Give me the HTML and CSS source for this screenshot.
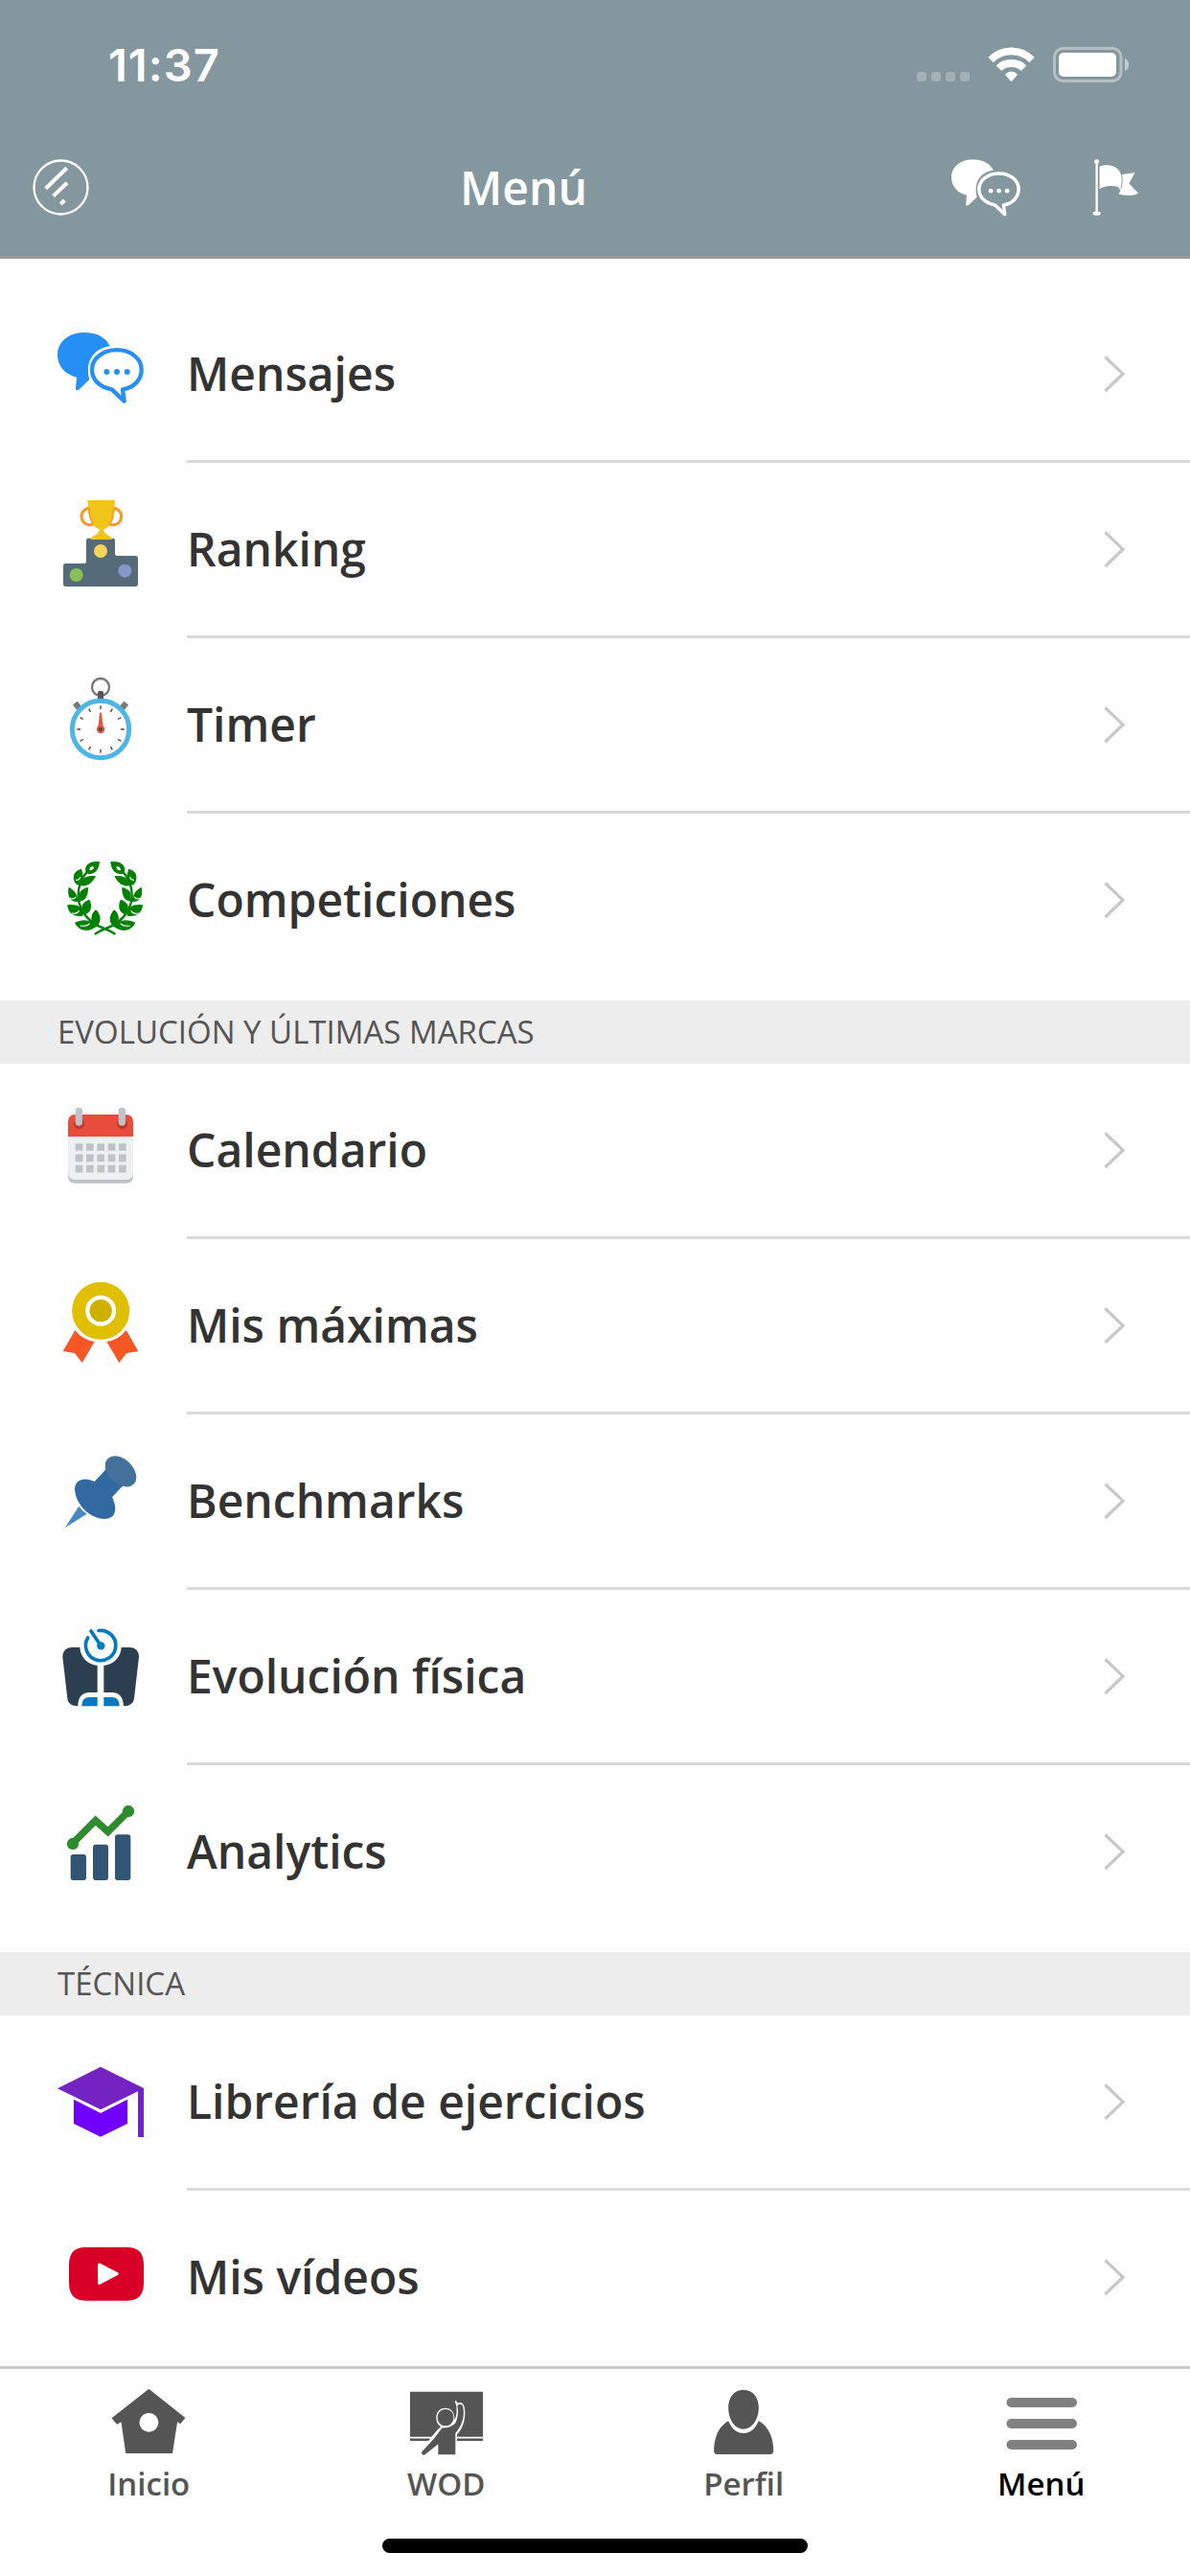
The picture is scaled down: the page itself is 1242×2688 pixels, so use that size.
FILE: index.html
```html
<!DOCTYPE html>
<html lang="es">
<head>
<meta charset="utf-8">
<title>Menú</title>
<link rel="stylesheet" href="styles.css">
</head>
<body>
<svg class="defs" aria-hidden="true">
  <symbol id="chat" viewBox="60 57 270 270">
    <path fill="currentColor" d="M142 81c46 0 71 18 82 43c-40 4-68 35-68 73c0 12 1 22 4 31l-32 31c-5 5-12 3-11-4l3-34c-38-8-60-37-60-70c0-42 37-70 82-70z"/>
    <path fill="none" stroke="currentColor" stroke-width="13" stroke-linejoin="round" d="M246 135.500c43 0 77 27 77 61.500c0 31-23 57-59 62l5 37-39-37c-38-7-62-30-62-62c0-35 35-61.500 78-61.500z"/>
    <g fill="currentColor"><circle cx="214" cy="204" r="9"/><circle cx="246" cy="204" r="9"/><circle cx="278" cy="204" r="9"/></g>
  </symbol>
  <symbol id="chevron" viewBox="0 0 24 40"><path fill="none" stroke="#c8c8c8" stroke-width="3.200" d="M2.500 2.500L21 20.200 2.500 38"/></symbol>
  <g id="branch">
    <path fill="none" stroke="#008000" stroke-width="7" stroke-linecap="round" d="M239 883C220 868 190 864 168 846C138 822 125 790 125 765C125 735 134 708 154 688"/>
    <path fill="#008000" fill-rule="evenodd" d="M192 657C170 656 152 661 148 677C145 689 152 697 163 696C181 694 190 680 192 657zM160 684C160 676 166 671 174 674C173 681 168 685 160 684z"/>
    <path fill="#008000" d="M135 680C116 684 109 697 111 711C112 721 117 730 127 731L134 715C143 700 138 690 135 680zM180 703C157 699 138 707 137 718L129 731C152 739 168 725 180 703zM95 737C90 760 97 784 123 783C129 778 126 773 122 768C116 751 107 743 95 737zM156 738C137 741 127 752 129 764L126 782C148 781 157 764 156 738zM91 793C92 815 108 832 139 827L142 817C139 798 116 788 91 793zM160 776C142 782 134 793 137 807L144 823C167 818 170 794 160 776zM114 848C125 873 154 880 178 863L188 855L170 848C151 837 132 840 114 848zM180 808C166 819 161 838 173 851L188 855C199 839 193 819 180 808z"/>
    <path fill="none" stroke="#fff" stroke-width="3.500" stroke-linecap="round" d="M119 715Q129 715 131 706M100 772Q112 777 117 768M105 819Q121 822 127 812M132 858Q151 861 160 852"/>
  </g>
</svg>

<header class="header">
  <div class="status">
    <time class="clock">11:37</time>
    <svg class="status-icons" viewBox="956 48 224 40">
      <g fill="#fff" fill-opacity=".25"><rect x="957" y="75" width="10" height="10" rx="3"/><rect x="972" y="75" width="10" height="10" rx="3"/><rect x="987" y="75" width="10" height="10" rx="3"/><rect x="1002" y="75" width="10" height="10" rx="3"/></g>
      <g fill="none" stroke="#fff" stroke-width="7.800"><path d="M1034 62.400Q1043 53.300 1055.500 53.300T1077 62.400"/><path d="M1042.500 71.200Q1047.500 66 1055.500 66T1068.500 71.200"/></g>
      <path fill="#fff" d="M1049 77.700Q1055.500 71.500 1062 77.700L1056.300 84.500Q1055.500 85.300 1054.700 84.500z"/>
      <rect x="1100.500" y="50.500" width="69.500" height="34" rx="9" fill="none" stroke="#fff" stroke-opacity=".4" stroke-width="3"/>
      <rect x="1105" y="55" width="60" height="25" rx="5" fill="#fff"/>
      <path fill="#fff" fill-opacity=".5" d="M1174 61q4 1.500 4 6.500t-4 6.500z"/>
    </svg>
  </div>
  <div class="nav">
    <svg class="logo" viewBox="34 166 60 60"><circle cx="63.500" cy="195.500" r="28" fill="none" stroke="#fff" stroke-width="2.300"/><path fill="none" stroke="#fff" stroke-width="4" d="M69.800 175.300L47.700 196.800M70 190.700L55.600 204.600M63.300 213L67.300 209"/></svg>
    <h1 class="title">Menú</h1>
    <svg class="nav-chat"><use href="#chat"/></svg>
    <svg class="flag" viewBox="480 44 148 184"><path fill="#fff" d="M490.500 60h7v153h-7zM503 70C530 60 560 67 570 93C576 111 571 127 569 147C563 136 564 136 558 134C540 129 519 131 503 141zM574 95L614 90L596 124L625 154C608 166 580 161 563 157C574 142 578 119 574 95z"/><circle cx="494" cy="55" r="7.500" fill="#fff"/><ellipse cx="494" cy="218" rx="12.500" ry="6.500" fill="#fff"/></svg>
  </div>
</header>

<main class="menu">
  <ul class="group">
    <li class="row"><svg class="icon blue"><use href="#chat"/></svg><div class="body"><span>Mensajes</span><svg class="chev"><use href="#chevron"/></svg></div></li>
    <li class="row">
      <svg class="icon" viewBox="60 606 270 270">
        <path fill="#556b79" d="M78 811q0-7 7-7h58q7 0 7-7v-65q0-7 7-7h76q7 0 7 7v41q0 7 7 7h58q7 0 7 7v82q0 7-7 7H85q-7 0-7-7z"/>
        <circle cx="195" cy="765" r="21" fill="#f3d55b"/><circle cx="119" cy="840" r="21" fill="#88c057"/><circle cx="271" cy="827" r="21" fill="#8697cb"/>
        <g fill="none" stroke="#f49c20" stroke-width="9"><path d="M163 631a26 26 0 1 0 10 49M232 631a26 26 0 1 1-10 49"/></g>
        <path fill="#f0c419" d="M155 606h85q0 45-10 65-8 20-26 26 1 11 14 19 12 4 13 13h-67q1-9 13-13 14-8 15-19-18-6-27-26-10-20-10-65z"/>
        <path fill="none" stroke="#f49c20" stroke-width="5" d="M159 629q0 34 13 51M236 629q0 34-13 51"/>
      </svg><div class="body"><span>Ranking</span><svg class="chev"><use href="#chevron"/></svg></div></li>
    <li class="row">
      <svg class="icon" viewBox="60 75 270 270">
        <circle cx="195" cy="111" r="27" fill="none" stroke="#777" stroke-width="7"/>
        <path fill="none" stroke="#777" stroke-width="18" d="M115 161l13 16M275 161l-13 16"/>
        <path fill="#555" d="M186 128q0-5 5-5h8q5 0 5 5v23h-18z"/>
        <circle cx="195" cy="243" r="89" fill="#fff" stroke="#4db6e6" stroke-width="15"/>
        <g stroke="#444" stroke-width="4"><path id="tk" d="M195 169v11M195 306v11"/><use href="#tk" transform="rotate(30 195 243)"/><use href="#tk" transform="rotate(60 195 243)"/><use href="#tk" transform="rotate(90 195 243)"/><use href="#tk" transform="rotate(120 195 243)"/><use href="#tk" transform="rotate(150 195 243)"/></g>
        <path fill="#e9573f" d="M192 192q3-4 6 0l5 45h-16z"/><circle cx="195" cy="243" r="12.500" fill="#e9573f"/><circle cx="195" cy="243" r="7" fill="#5a4a48"/>
      </svg><div class="body"><span>Timer</span><svg class="chev"><use href="#chevron"/></svg></div></li>
    <li class="row">
      <svg class="icon" viewBox="60 624 270 270"><use href="#branch"/><use href="#branch" transform="matrix(-1 0 0 1 418 0)"/></svg><div class="body"><span>Competiciones</span><svg class="chev"><use href="#chevron"/></svg></div></li>
  </ul>
  <h2 class="section">EVOLUCIÓN Y ÚLTIMAS MARCAS</h2>
  <ul class="group">
    <li class="row">
      <svg class="icon" viewBox="60 357 270 270">
        <path fill="#bdc3c7" d="M93 450h204v141q0 23-23 23H116q-23 0-23-23z"/>
        <path fill="#ecf0f1" d="M93 450h204v130q0 23-23 23H116q-23 0-23-23z"/>
        <path fill="#e84c3d" d="M93 468v-46q0-23 23-23h158q23 0 23 23v46z"/>
        <path fill="#c0392b" d="M116 416v14h22v-14q6 4 6 12a16.500 16.500 0 0 1-33 0q0-8 5-12zM251 416v14h22v-14q6 4 6 12a16.500 16.500 0 0 1-33 0q0-8 5-12z"/>
        <g fill="#bdc3c7"><rect x="116" y="377" width="22" height="57" rx="11"/><rect x="251" y="377" width="22" height="57" rx="11"/></g>
        <path fill="none" stroke="#bdc3c7" stroke-width="23" stroke-dasharray="23 11" d="M116 501h159M116 535h159M116 569h159"/>
      </svg><div class="body"><span>Calendario</span><svg class="chev"><use href="#chevron"/></svg></div></li>
    <li class="row">
      <svg class="icon" viewBox="60 906 270 270">
        <path fill="#f75625" d="M115 1074Q138 1104 176 1110L137 1176L114 1146L77 1140zM275 1074Q252 1104 214 1110L253 1176L276 1146L313 1140z"/>
        <circle cx="195.500" cy="1013" r="90" fill="#dfbf00"/><circle cx="195.500" cy="1013" r="41.500" fill="#cdb000" stroke="#fff" stroke-width="13"/>
      </svg><div class="body"><span>Mis máximas</span><svg class="chev"><use href="#chevron"/></svg></div></li>
    <li class="row">
      <svg class="icon" viewBox="60 105 270 270">
        <path fill="#4888c3" d="M127 275Q137 290 152 299L84 342z"/>
        <path fill="#316aa1" d="M176 198L217 154L269 206L231 247C248 280 245 315 207 315C155 312 116 265 114 221C115 191 145 182 176 198z"/>
        <ellipse cx="258" cy="166" rx="57" ry="38" transform="rotate(44 258 166)" fill="#44719c"/>
      </svg><div class="body"><span>Benchmarks</span><svg class="chev"><use href="#chevron"/></svg></div></li>
    <li class="row">
      <svg class="icon" viewBox="60 654 270 270">
        <path fill="#2c3e50" d="M130 717C132 748 154 771 185 774V858H157Q124 861 124 901Q93 900 91 877L76 746Q77 719 104 717zM260 717C258 748 236 771 205 774V858H235Q265 861 267 901Q298 900 300 877L315 746Q314 719 287 717z"/>
        <path fill="#0079c1" d="M185 873v28h-49q0-28 24-28zM205 873v28h49q0-28-24-28z"/>
        <path fill="none" stroke="#0079c1" stroke-width="11" stroke-linecap="round" d="M155 687A47 47 0 1 0 189 664.500M165 666L195 711"/><circle cx="196" cy="712" r="12.500" fill="#0079c1"/>
      </svg><div class="body"><span>Evolución física</span><svg class="chev"><use href="#chevron"/></svg></div></li>
    <li class="row">
      <svg class="icon" viewBox="60 123 270 270">
        <g fill="#335575"><rect x="101" y="285" width="49" height="81" rx="8"/><rect x="171" y="254" width="48" height="112" rx="8"/><rect x="240" y="223" width="49" height="143" rx="8"/></g>
        <path fill="none" stroke="#2e8b2e" stroke-width="22" d="M108 250L179 179L218 214L282 150"/><circle cx="108" cy="252" r="18.500" fill="#2e8b2e"/><circle cx="282" cy="150" r="18.500" fill="#2e8b2e"/>
      </svg><div class="body"><span>Analytics</span><svg class="chev"><use href="#chevron"/></svg></div></li>
  </ul>
  <h2 class="section">TÉCNICA</h2>
  <ul class="group">
    <li class="row">
      <svg class="icon" viewBox="60 36 270 270">
        <path fill="#7423c3" d="M195 80L330 147V300H312V157L195 214L60 148z"/><path fill="#7200ff" d="M111 182L195 225L279 182V258L195 299L111 258z"/>
      </svg><div class="body"><span>Librería de ejercicios</span><svg class="chev"><use href="#chevron"/></svg></div></li>
    <li class="row">
      <svg class="icon" viewBox="60 585 270 270">
        <path fill="#d80027" d="M96 700Q96 645 147 645H279Q330 645 330 700V757Q330 812 279 812H147Q96 812 96 757z"/><path fill="#fff" d="M186 701q0-9 9-5l52 27q9 5 0 10l-51 27q-10 5-10-5z"/>
      </svg><div class="body"><span>Mis vídeos</span><svg class="chev"><use href="#chevron"/></svg></div></li>
  </ul>
</main>

<footer class="footer">
  <nav class="tabs">
    <a class="tab"><svg class="tab-icon" viewBox="285 150 212 225" preserveAspectRatio="none"><path fill="#555" fill-rule="evenodd" d="M392 158L488 249L475 268L467 262L454 360H331L319 262L308 269L294 250zM392 234a25 29.500 0 1 0 .1 0z"/></svg><span>Inicio</span></a>
    <a class="tab"><svg class="tab-icon" viewBox="42 30 252 225">
      <path fill="#555" d="M54 47H282V188H201V181C222 160 230 125 224 95C222 82 210 78 204 83L198 75L194 77L199 91C201 114 199 125 192 136C195 114 184 98 165 98C145 98 135 113 136 132C137 145 143 153 151 157C141 162 134 176 121 188H54zM54 193.500H117Q115 201 109 201H54zM201 193.500H282V201H201z"/>
      <path fill="#555" d="M165 102c15 0 25 12 25 26s-10 26-25 26-25-12-25-26 10-26 25-26z"/>
      <path fill="#555" d="M155 160Q183 162 196 145C203 131 207 109 202 92C207 83 218 84 220 95C226 127 215 155 196 177V244H142V211L103 242Q94 249 90 240Q89 235 98 227L128 195Z"/>
    </svg><span>WOD</span></a>
    <a class="tab"><svg class="tab-icon" viewBox="285 570 212 225" preserveAspectRatio="none"><path fill="#555" d="M391 581C417 581 431 607 431 637C431 672 415 704 391 704S351 672 351 637C351 607 365 581 391 581zM351 679C360 704 374 717 391 717S422 704 431 678C456 695 470 730 470 772Q470 783 461 783H321Q313 783 313 772C313 730 326 696 351 679z"/></svg><span>Perfil</span></a>
    <a class="tab active"><svg class="tab-icon" viewBox="1045 2490 84 75"><g fill="#808080"><rect x="1050.500" y="2502" width="73.500" height="10" rx="5"/><rect x="1050.500" y="2524" width="73.500" height="10" rx="5"/><rect x="1050.500" y="2546" width="73.500" height="10" rx="5"/></g></svg><span>Menú</span></a>
  </nav>
  <div class="home-bar"></div>
</footer>
</body>
</html>
```
FILE: styles.css
```css
* { box-sizing: border-box; margin: 0; padding: 0; }
body {
  width: 1242px;
  height: 2688px;
  display: flex;
  flex-direction: column;
  overflow: hidden;
  background: #fefefe;
  color: #333;
  font-family: "Open Sans", "Noto Sans", sans-serif;
}
svg { display: block; flex: none; }
.defs { position: absolute; width: 0; height: 0; }

.header {
  height: 270px;
  flex: none;
  background: #84979f;
  border-bottom: 3px solid #999;
  color: #fff;
}
.status {
  height: 132px;
  display: flex;
  justify-content: space-between;
  align-items: flex-start;
  padding: 39px 62px 0 113px;
}
.clock { font: 600 47px/58px Inter, sans-serif; letter-spacing: 1px; }
.status-icons { width: 224px; height: 40px; margin-top: 9px; }
.nav {
  height: 127px;
  display: flex;
  align-items: center;
  padding: 0 53px 0 34px;
}
.logo { width: 60px; height: 60px; margin-right: 6px; }
.title { flex: 1; text-align: center; font-size: 48px; font-weight: 600; line-height: 66px; }
.nav-chat { width: 72px; height: 72px; margin-right: 75px; }
.flag { width: 49px; height: 61px; }

.menu { flex: none; height: 2199px; padding-top: 30px; overflow: hidden; }
.group { list-style: none; padding-bottom: 12px; }
.row { display: flex; height: 183px; padding-left: 60px; }
.icon { width: 90px; height: 90px; margin: 39px 45px 0 0; }
.blue { color: #268ff5; }
.body {
  flex: 1;
  display: flex;
  align-items: center;
  justify-content: space-between;
  padding-right: 67px;
  border-bottom: 3px solid #dadada;
  font-size: 48px;
  font-weight: 600;
  line-height: 66px;
}
.row:last-child .body { border-bottom-color: transparent; }
.chev { width: 24px; height: 40px; }
.section {
  height: 66px;
  padding-left: 60px;
  background: #ededed;
  color: #555;
  font-size: 33px;
  font-weight: 400;
  line-height: 66px;
}

.footer {
  flex: none;
  height: 219px;
  background: #fefefe;
  border-top: 3px solid #cacbca;
}
.tabs { display: flex; }
.tab {
  flex: 1;
  display: flex;
  flex-direction: column;
  align-items: center;
  padding-top: 18px;
  color: #555;
  font-size: 33px;
  font-weight: 600;
  line-height: 44px;
}
.tab-icon { width: 84px; height: 75px; margin-bottom: 5px; }
.active { color: #000; }
.home-bar { width: 444px; height: 15px; margin: 35px auto 0; border-radius: 8px; background: #000; }
```
